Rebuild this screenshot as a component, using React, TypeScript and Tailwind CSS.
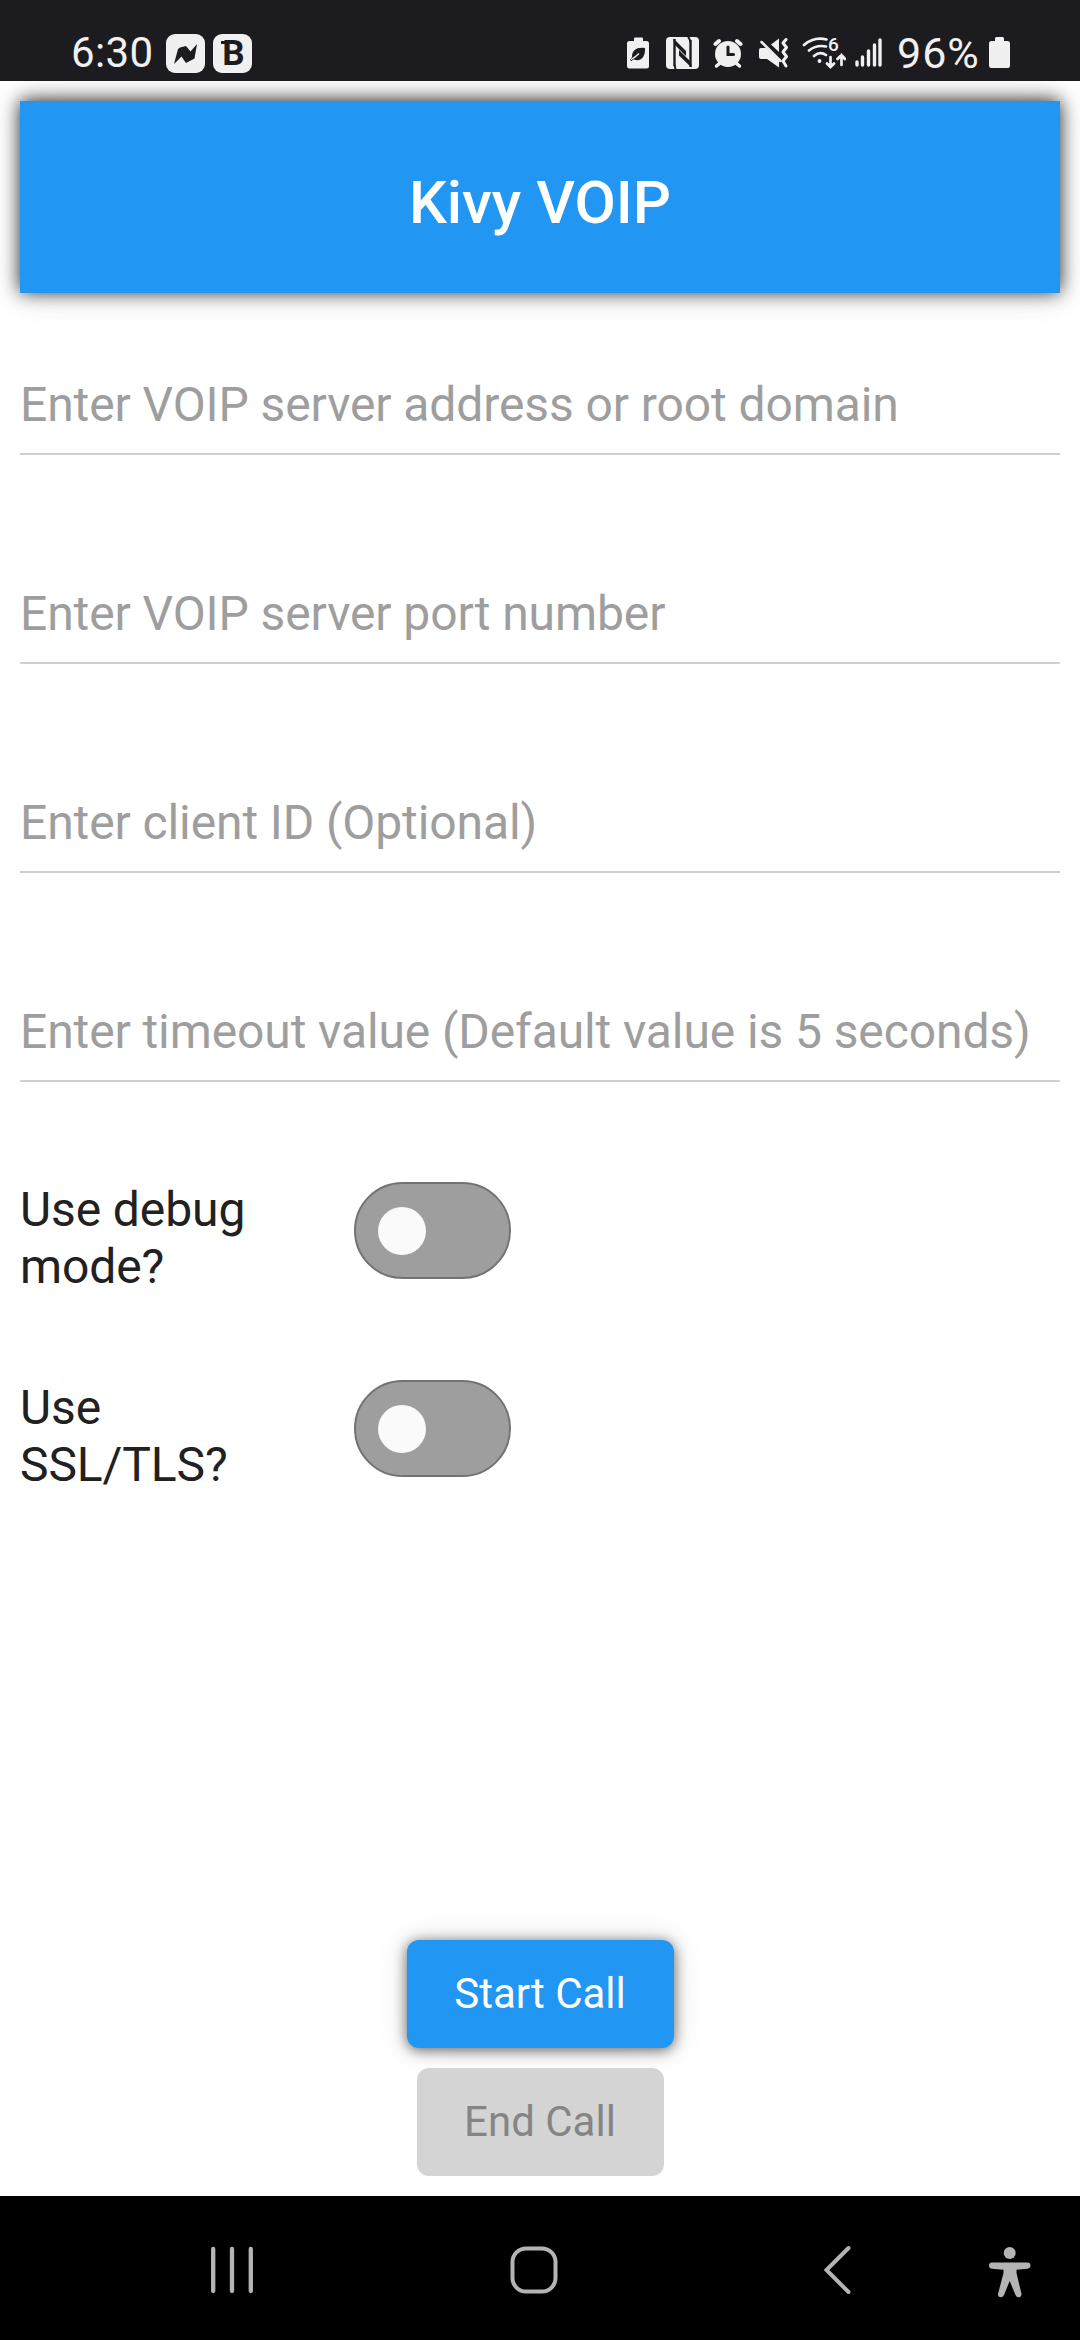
import React from "react";

const LIGHT = "#f0f0f0";
const DARK = "#1c1b20";

function StatusBar() {
  return (
    <header className="relative z-10 flex h-[81px] shrink-0 items-start bg-[#1c1b20] text-[#f0f0f0]">
      <span className="ml-[71px] mt-[29px] w-[95px] whitespace-nowrap text-[42px] leading-[48px] tracking-[0.4px]">6:30</span>
      <svg className="mt-[34px] h-[39px] w-[39px]" viewBox="0 0 39 39">
        <rect width="39" height="39" rx="9" fill={LIGHT} />
        <path d="M8 30 L12 15 L14 13.500 L20 12 L24.500 17.500 L31 10 L28.500 24.500 L20 29 L15.500 22.500 Z" fill={DARK} />
      </svg>
      <div className="relative ml-2 mt-[34px] flex h-[39px] w-[39px] items-center justify-center rounded-[9px] bg-[#f0f0f0] pl-0.5 text-[35px] leading-[39px] font-bold text-[#1c1b20]">
        B
        <span className="absolute left-[8px] top-[7px] h-[3px] w-[4px] bg-[#1c1b20]" />
      </div>

      <svg className="ml-[375px] mt-[37px] h-8 w-[23px]" viewBox="0 0 23 32">
        <path d="M7 1.500Q7 .5 8 .5H15Q16 .5 16 1.500V4H19.500Q22 4 22 6.500V29Q22 31.500 19.500 31.500H2.500Q0 31.500 0 29V6.500Q0 4 2.500 4H7Z" fill={LIGHT} />
        <path d="M18 11C9 10 5 13.500 5 20L3 23L4.500 24Q6 22 7 22.500C14 25 18.500 20 18 11Z" fill={DARK} />
        <path d="M4 22.500Q8 20.500 12 16.500" stroke={LIGHT} strokeWidth="1.300" fill="none" />
      </svg>
      <svg className="ml-4 mt-[37px] h-8 w-[33px]" viewBox="0 0 33 32">
        <rect width="33" height="32" rx="4" fill={LIGHT} />
        <path d="M8.500 2V29M24.500 3V30" stroke={DARK} strokeWidth="2.400" fill="none" />
        <path d="M7.500 1.500L20 14V19L8 7Z M25.500 30.500L13 18.500V13L25 25Z" fill={DARK} />
        <path d="M8.500 28L9.500 32M22 0Q24 2 24.500 5" stroke={DARK} strokeWidth="2" fill="none" />
      </svg>
      <svg className="ml-[14px] mt-[37px] h-8 w-[30px]" viewBox="0 0 30 32" strokeLinecap="round" fill="none">
        <circle cx="15" cy="17" r="13" fill={LIGHT} />
        <path d="M7 26L3.500 29M23 26L26.500 29" stroke={LIGHT} strokeWidth="3.500" />
        <path d="M2.500 7L6 4M27.500 7L24 4" stroke={LIGHT} strokeWidth="4" />
        <path d="M15 10V17.500H20.500" stroke={DARK} strokeWidth="3" />
      </svg>
      <svg className="ml-[15px] mt-[37px] h-8 w-[31px]" viewBox="0 0 31 32" fill="none" strokeLinecap="round">
        <path d="M3 11H8L21 23.500V30.500L9 22H3Q1 22 1 20V13Q1 11 3 11ZM13 7.500L21 1.500V15Z" fill={LIGHT} />
        <path d="M3.500 5L22.500 24" stroke={LIGHT} strokeWidth="2.500" />
        <path d="M28 2.500L25 6L28.500 10.500L25 15L28.500 19.500L25 24L28 29" stroke={LIGHT} strokeWidth="3" strokeLinejoin="round" />
      </svg>
      <div className="relative ml-[13px] mt-[36px] h-[34px] w-[44px]">
        <svg className="h-[34px] w-[44px]" viewBox="0 0 44 34" fill="none" stroke={LIGHT} strokeWidth="2.700" strokeLinecap="round">
          <path d="M2 9Q12 .5 24.500 3.500M7 14.500Q14.500 8.500 24 10.500M12 20Q18 15 24 19" />
          <circle cx="17.500" cy="25" r="1.200" fill={LIGHT} strokeWidth="1.500" />
          <path d="M28.500 21V31M25 27.500L28.500 31L32 27.500M39.500 29V19M35.500 23L39.500 19L43 23" />
        </svg>
        <span className="absolute left-[26px] top-0 text-[19px] leading-[17px] font-medium">6</span>
      </div>
      <svg className="ml-[9px] mt-[37px] h-[31px] w-[27px]" viewBox="0 0 27 31" stroke={LIGHT} strokeWidth="3.400" strokeLinecap="round">
        <path d="M2 25V28M7.500 20V28M13.500 14V28M19.500 8V28M25 3V28" />
      </svg>
      <span className="ml-[15px] mt-[29px] w-[92px] whitespace-nowrap text-[43px] leading-[48px] tracking-[1px]">96%</span>
      <svg className="mt-[37px] h-8 w-[21px]" viewBox="0 0 21 32">
        <path d="M6 1.500Q6 0 7.500 0H13.500Q15 0 15 1.500V4H18.500Q21 4 21 6.500V28.500Q21 31 18.500 31H2.500Q0 31 0 28.500V6.500Q0 4 2.500 4H6Z" fill={LIGHT} />
      </svg>
    </header>
  );
}

function Field({ hint }: { hint: string }) {
  return (
    <label className="flex h-[209px] items-end">
      <div className="flex h-[78px] w-full items-start border-b-2 border-[#cfcfcf] text-[48px] leading-[56px] tracking-[-0.1px] whitespace-nowrap text-[#9e9e9e]">
        {hint}
      </div>
    </label>
  );
}

function Toggle({ label }: { label: string }) {
  return (
    <div className="flex h-[198px] items-start">
      <div className="-mt-px w-[260px] text-[48px] leading-[57px] tracking-[-0.1px] text-[#212121]">{label}</div>
      <button className="ml-[74px] flex h-[97px] w-[157px] items-center rounded-[49px] border-2 border-[#727272] bg-[#9e9e9e] pl-[22px]">
        <span className="h-12 w-12 rounded-full bg-[#fafafa]" />
      </button>
    </div>
  );
}

function NavBar() {
  return (
    <nav className="relative z-10 flex h-[144px] shrink-0 items-start bg-black">
      <svg className="ml-[210px] mt-[50px] h-[48px] w-[44px]" viewBox="0 0 44 48" stroke="#b4b4b4" strokeWidth="4.300" strokeLinecap="round">
        <path d="M3.200 3V45M22 3V45M40.800 3V45" />
      </svg>
      <svg className="ml-[256px] mt-[50px] h-[48px] w-[48px]" viewBox="0 0 48 48" fill="none" stroke="#b4b4b4" strokeWidth="4">
        <rect x="2.500" y="2.500" width="43" height="43" rx="13.500" />
      </svg>
      <svg className="ml-[265px] mt-[49px] h-[50px] w-[30px]" viewBox="0 0 30 50" fill="none" stroke="#b4b4b4" strokeWidth="4" strokeLinecap="round">
        <path d="M25.500 3L3.500 25L25.500 47" />
      </svg>
      <svg className="ml-[136px] mt-[50px] h-[53px] w-[42px]" viewBox="0 0 42 53" fill="#b4b4b4">
        <circle cx="20.700" cy="7" r="6" />
        <path d="M3 16.500H38.500Q41.500 16.700 41.500 19.500T38.500 22.700L27.500 23.700V27L32.500 48Q32.500 51 30 51.300Q27.600 51.500 26.500 49L20.700 35L15 49Q14 51.500 11.500 51.300Q8.500 51 9 48L14.500 27V23.700L3 22.700Q0 22.500 0 19.500T3 16.500Z" />
      </svg>
    </nav>
  );
}

export default function App() {
  return (
    <div className="flex h-[2340px] w-[1080px] flex-col overflow-hidden bg-white font-[Roboto,sans-serif]">
      <StatusBar />
      <main className="flex flex-1 flex-col px-5 pt-5">
        <h1 className="flex h-48 shrink-0 items-center justify-center bg-[#2196f3] pt-3 text-[60px] leading-[70px] font-medium text-white shadow-[0_-1px_18px_rgba(0,0,0,0.85),0_4px_40px_rgba(0,0,0,0.06)]">
          Kivy VOIP
        </h1>
        <section className="-mt-[47px]">
          <Field hint="Enter VOIP server address or root domain" />
          <Field hint="Enter VOIP server port number" />
          <Field hint="Enter client ID (Optional)" />
          <Field hint="Enter timeout value (Default value is 5 seconds)" />
        </section>
        <section className="mt-[100px]">
          <Toggle label="Use debug mode?" />
          <Toggle label="Use SSL/TLS?" />
        </section>
        <div className="mt-auto flex flex-col items-center gap-5 pb-5">
          <button className="relative z-0 h-[108px] w-[267px] rounded-xl bg-[#2196f3] text-[42px] leading-[48px] text-white shadow-[0_2px_14px_rgba(0,0,0,0.6),0_0_36px_rgba(0,0,0,0.1)]">
            Start Call
          </button>
          <button className="relative z-10 h-[108px] w-[247px] rounded-xl bg-[#d4d4d4] text-[42px] leading-[48px] text-[#858585]">
            End Call
          </button>
        </div>
      </main>
      <NavBar />
    </div>
  );
}
